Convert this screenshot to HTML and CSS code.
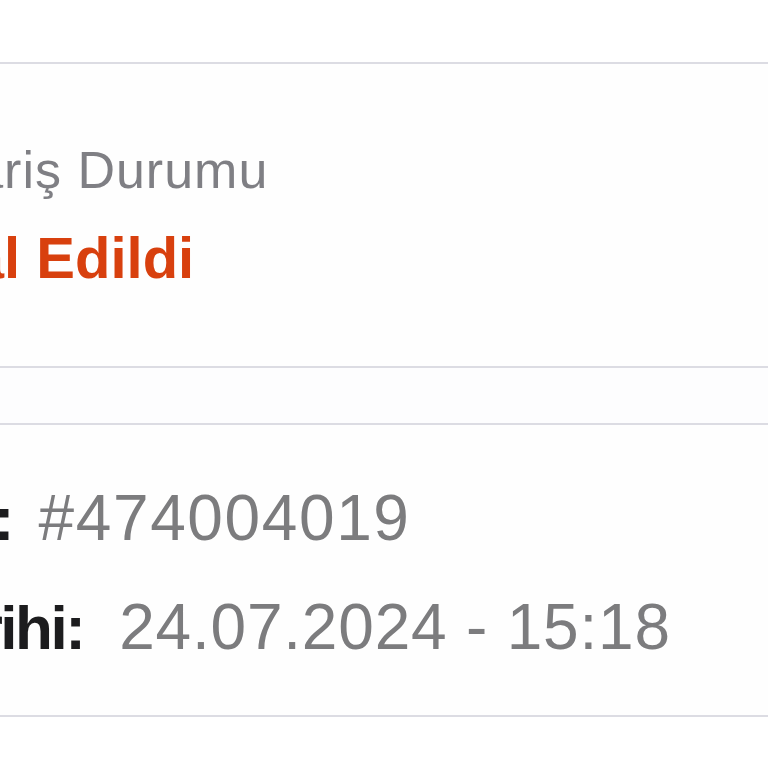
FILE: index.html
```html
<!DOCTYPE html>
<html lang="tr">
<head>
<meta charset="utf-8">
<title>Sipariş</title>
<link rel="stylesheet" href="styles.css">
</head>
<body>
<div class="top"></div>
<section class="card status-card">
  <div class="title">Sipariş Durumu</div>
  <div class="status">İptal Edildi</div>
</section>
<div class="gap"></div>
<section class="card info-card">
  <div class="row row1"><span class="label">Sipariş No:</span> <span class="value">#474004019</span></div>
  <div class="row row2"><span class="label">Sipariş Tarihi:</span> <span class="value">24.07.2024 - 15:18</span></div>
</section>
<div class="rest"></div>
</body>
</html>
```
FILE: styles.css
```css
html, body {
  margin: 0;
  padding: 0;
  background: #ffffff;
  overflow: hidden;
  font-family: "Liberation Sans", Arial, sans-serif;
}
body {
  width: 768px;
  height: 768px;
}
.top {
  height: 62px;
  background: #ffffff;
}
.card {
  background: #fefefe;
  border-top: 2px solid #dcdce3;
  border-bottom: 2px solid #dcdce3;
  overflow: hidden;
  white-space: nowrap;
}
.status-card {
  padding: 76px 0 73px 0;
}
.title {
  margin-left: -104px;
  font-size: 52px;
  line-height: 60px;
  letter-spacing: 1px;
  color: #7f7f84;
}
.status {
  margin-top: 23px;
  margin-left: -99px;
  font-size: 58px;
  line-height: 70px;
  font-weight: bold;
  color: #d8400e;
}
.gap {
  height: 55px;
  background: #fdfdfe;
}
.info-card {
  padding: 55px 0 49px 0;
}
.row {
  margin-left: -288px;
  font-size: 64px;
  line-height: 76px;
}
.row2 {
  margin-top: 32px;
}
.label {
  font-size: 62px;
  font-weight: bold;
  color: #1c1c1e;
  letter-spacing: -2.5px;
}
.value {
  color: #7c7c7e;
}
.row1 .value {
  margin-left: 9px;
  letter-spacing: 1.6px;
}
.row2 .value {
  margin-left: 18px;
  letter-spacing: 0.8px;
}
.rest {
  height: 60px;
  background: #ffffff;
}
```
